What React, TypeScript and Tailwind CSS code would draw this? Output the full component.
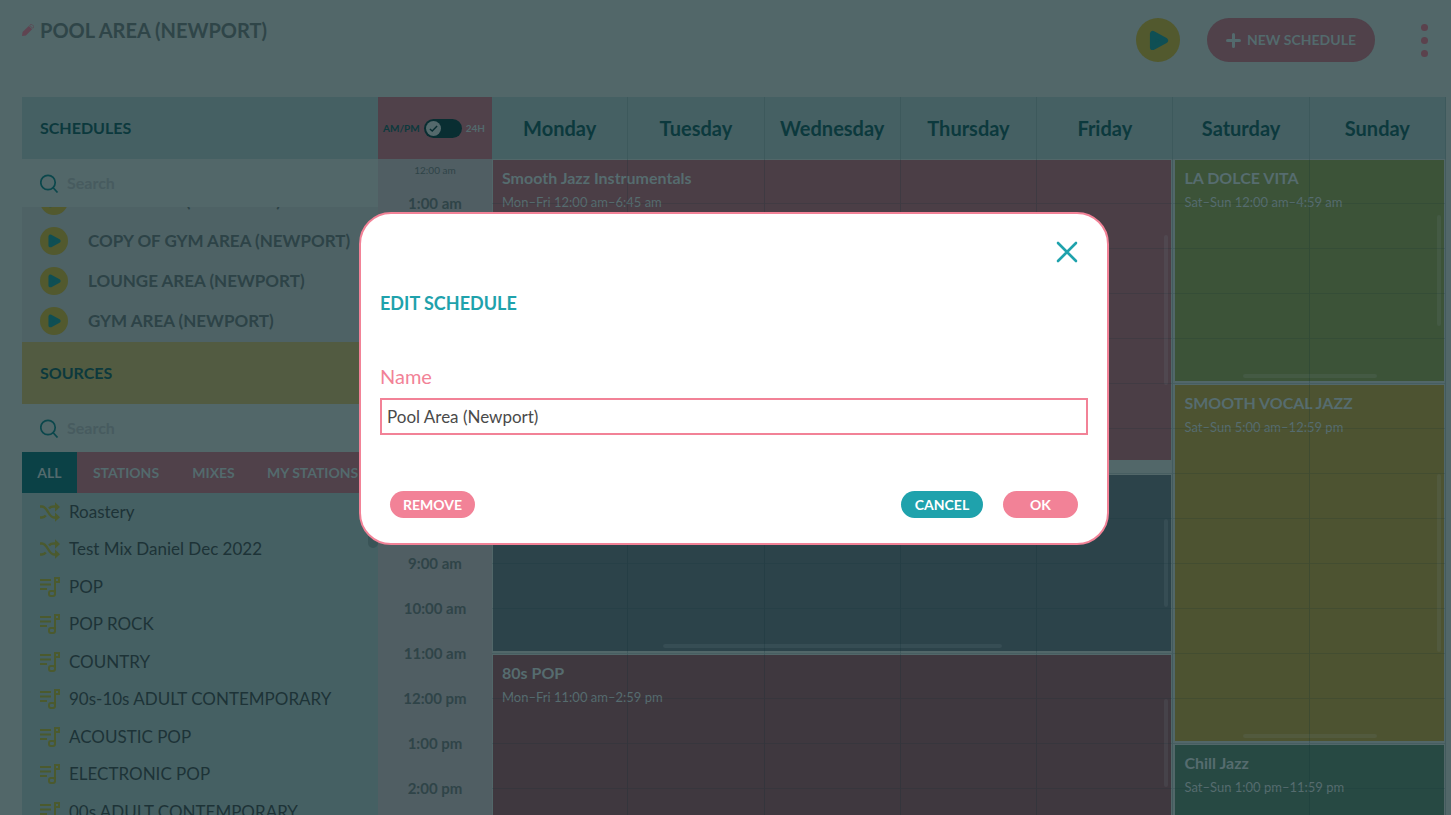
import { useState } from "react";

const HOUR_HEIGHT = 45;

const days = ["Monday", "Tuesday", "Wednesday", "Thursday", "Friday", "Saturday", "Sunday"];

const hours = [
  "1:00 am", "2:00 am", "3:00 am", "4:00 am", "5:00 am", "6:00 am", "7:00 am", "8:00 am",
  "9:00 am", "10:00 am", "11:00 am", "12:00 pm", "1:00 pm", "2:00 pm", "3:00 pm",
];

const schedules = [
  "POOL AREA (NEWPORT)",
  "COPY OF GYM AREA (NEWPORT)",
  "LOUNGE AREA (NEWPORT)",
  "GYM AREA (NEWPORT)",
];

const sources = [
  { name: "Roastery", mix: true },
  { name: "Test Mix Daniel Dec 2022", mix: true },
  { name: "POP" },
  { name: "POP ROCK" },
  { name: "COUNTRY" },
  { name: "90s-10s ADULT CONTEMPORARY" },
  { name: "ACOUSTIC POP" },
  { name: "ELECTRONIC POP" },
  { name: "00s ADULT CONTEMPORARY" },
];

type Slot = { start: number; end: number; title?: string; time?: string; color?: string };

// Slots without a title are gaps in the schedule.
const weekdaySlots: Slot[] = [
  { start: 0, end: 6.75, title: "Smooth Jazz Instrumentals", time: "Mon–Fri 12:00 am–6:45 am", color: "bg-[#4b3e46]" },
  { start: 6.75, end: 7 },
  { start: 7, end: 11, title: "POP", time: "Mon–Fri 7:00 am–10:59 am", color: "bg-[#2c434a]" },
  { start: 11, end: 15, title: "80s POP", time: "Mon–Fri 11:00 am–2:59 pm", color: "bg-[#3f383f]" },
];

const weekendSlots: Slot[] = [
  { start: 0, end: 5, title: "LA DOLCE VITA", time: "Sat–Sun 12:00 am–4:59 am", color: "bg-[#3c5338]" },
  { start: 5, end: 13, title: "SMOOTH VOCAL JAZZ", time: "Sat–Sun 5:00 am–12:59 pm", color: "bg-[#4d5331]" },
  { start: 13, end: 24, title: "Chill Jazz", time: "Sat–Sun 1:00 pm–11:59 pm", color: "bg-[#274943]" },
];

function PlayIcon({ className }: { className: string }) {
  return (
    <svg viewBox="0 0 20 22" className={className} fill="#0f4f54" stroke="#0f4f54" strokeWidth="6" strokeLinejoin="round">
      <path d="M3.500 4v14L16.500 11z" />
    </svg>
  );
}

function ShuffleIcon() {
  return (
    <svg viewBox="0 0 20 20" className="size-5 shrink-0" fill="none" stroke="#4b5a2e" strokeWidth="2.4">
      <path d="M0 4.5h2c5.500 0 6.500 11 12 11h2" />
      <path d="M0 15.500h2c1.600 0 2.800-.7 3.800-1.900" />
      <path d="M9 6.300c1.200-1.200 2.600-1.800 5-1.800h2" />
      <path d="M15 .3 20 5l-5 4.700zM15 10.500l5 4.700-5 4.600z" fill="#4b5a2e" stroke="none" />
    </svg>
  );
}

function PlaylistIcon() {
  return (
    <svg viewBox="0 0 20 20" className="size-5 shrink-0" fill="none" stroke="#4b5a2e" strokeWidth="2">
      <path d="M0 3h11M0 7.500h11M0 12h7" />
      <path d="M15 16V1h4v4h-4" />
      <rect x="9" y="14" width="6" height="5" rx="2" />
    </svg>
  );
}

function SearchBox({ id }: { id: string }) {
  return (
    <div className="flex h-12 shrink-0 items-center gap-2 pl-[18px]">
      <label htmlFor={id} aria-label="Search">
        <svg viewBox="0 0 19 19" className="size-[19px]" fill="none" stroke="#0b474c" strokeWidth="1.7">
          <circle cx="8" cy="8.500" r="7.200" />
          <path d="M13 13.500l4.500 5" />
        </svg>
      </label>
      <input
        id={id}
        type="text"
        placeholder="Search"
        className="min-w-0 flex-1 bg-transparent text-base font-bold outline-none placeholder:text-[#475b5f]"
      />
    </div>
  );
}

function SlotColumn({ slots, className }: { slots: Slot[]; className: string }) {
  return (
    <div className={className}>
      {slots.map((slot) => (
        <div
          key={slot.start}
          className="pt-px pr-[2px] pb-[3px] pl-px"
          style={{ height: (slot.end - slot.start) * HOUR_HEIGHT }}
        >
          {slot.title && (
            <div className={`relative h-full overflow-hidden px-[9px] pt-2 text-[#566c6f] ${slot.color}`}>
              <h3 className="text-base leading-5 font-bold">{slot.title}</h3>
              <p className="mt-1 text-[13px] leading-5">{slot.time}</p>
              <span className="absolute top-1/4 right-[3px] h-1/2 w-1 rounded-full bg-[#71898c]/15" />
              <span className="absolute bottom-[3px] left-1/4 h-1 w-1/2 rounded-full bg-[#71898c]/15" />
            </div>
          )}
        </div>
      ))}
    </div>
  );
}

function TopBar() {
  return (
    <header className="flex h-[97px] shrink-0 items-start justify-between pt-[18px] pr-[23px] pl-[22px]">
      <h1 className="flex items-center gap-[6px] text-xl leading-6 font-bold text-[#2f4548]">
        <svg viewBox="0 0 12 12" className="size-3" fill="#5f4451">
          <path d="M0 12l.6-3.900L6.800 1.900l3.300 3.300-6.200 6.200z" />
          <path d="M7.700 1.400l.8-.8c.5-.5 1.100-.5 1.600 0l1.300 1.300c.5.5.5 1.100 0 1.600l-.8.8z" fill="none" stroke="#5f4451" strokeWidth=".8" />
        </svg>
        POOL AREA (NEWPORT)
      </h1>
      <div className="flex items-center">
        <button aria-label="Play" className="flex size-11 items-center justify-center rounded-full bg-[#52592e]">
          <PlayIcon className="ml-px h-[21px] w-5" />
        </button>
        <button className="ml-[27px] flex h-11 w-[168px] items-center justify-center gap-[6px] rounded-full bg-[#50414a] text-sm font-bold whitespace-nowrap text-[#536a6d]">
          <svg viewBox="0 0 15 15" className="size-[15px]" stroke="#536a6d" strokeWidth="3" strokeLinecap="round">
            <path d="M7.500 1.500v12M1.500 7.500h12" />
          </svg>
          NEW SCHEDULE
        </button>
        <button aria-label="More options" className="ml-[46px] flex flex-col items-center gap-[6px]">
          <span className="size-[7px] rounded-full bg-[#5b424d]" />
          <span className="size-[7px] rounded-full bg-[#5b424d]" />
          <span className="size-[7px] rounded-full bg-[#5b424d]" />
        </button>
      </div>
    </header>
  );
}

function Sidebar() {
  return (
    <aside className="flex w-[356px] shrink-0 flex-col">
      <h2 className="flex h-[62px] shrink-0 items-center bg-[#456063] pl-[18px] text-base font-bold text-[#0c393d]">
        SCHEDULES
      </h2>
      <SearchBox id="schedule-search" />
      <ul className="flex h-[135px] shrink-0 flex-col justify-end overflow-hidden bg-[#4e6265] pb-px pl-[18px]">
        {schedules.map((name) => (
          <li key={name} className="flex h-10 shrink-0 items-center gap-5">
            <button aria-label={`Play ${name}`} className="flex size-7 shrink-0 items-center justify-center rounded-full bg-[#52592e]">
              <PlayIcon className="ml-px h-[14px] w-[13px]" />
            </button>
            <span className="text-[17px] font-bold whitespace-nowrap text-[#2d4347]">{name}</span>
          </li>
        ))}
      </ul>
      <h2 className="flex h-[62px] shrink-0 items-center bg-[#525b41] pl-[18px] text-base font-bold text-[#0c393d]">
        SOURCES
      </h2>
      <SearchBox id="source-search" />
      <nav className="flex h-[41px] shrink-0 overflow-hidden bg-[#50414a] text-sm font-bold whitespace-nowrap text-[#536a6d]">
        <button className="w-[55px] shrink-0 bg-[#0b4146]">ALL</button>
        <button className="w-[98px] shrink-0">STATIONS</button>
        <button className="w-[77px] shrink-0">MIXES</button>
        <button className="shrink-0 pl-[15px]">MY STATIONS</button>
      </nav>
      <div className="relative min-h-0 flex-1 overflow-hidden bg-[#456063]">
        <ul className="pl-[18px]">
          {sources.map((source) => (
            <li key={source.name} className="flex items-center gap-[9px] text-[17px] text-[#1d3337] odd:h-[37px] even:h-[38px]">
              {source.mix ? <ShuffleIcon /> : <PlaylistIcon />}
              {source.name}
            </li>
          ))}
        </ul>
        <span className="absolute top-0 right-0 h-[55px] w-[10px] rounded-full bg-[#3a5457]" />
      </div>
    </aside>
  );
}

function Calendar() {
  const [is24h, setIs24h] = useState(false);

  return (
    <main className="flex min-w-0 flex-1 flex-col">
      <div className="flex h-[62px] shrink-0">
        <label className="flex w-[114px] shrink-0 items-center justify-center gap-1 bg-[#50414a] pr-[2px] text-[10px] font-bold text-[#0c393d]">
          AM/PM
          <input type="checkbox" className="sr-only" checked={is24h} onChange={() => setIs24h(!is24h)} />
          <span className={`flex h-[19px] w-[38px] items-center rounded-full bg-[#092e32] px-[2px] ${is24h ? "justify-end" : ""}`}>
            <span className="flex size-[15px] items-center justify-center rounded-full bg-[#54696c]">
              <svg viewBox="0 0 10 10" className="size-[9px]" fill="none" stroke="#092e32" strokeWidth="1.6">
                <path d="M1 5.500l2.600 2.300L9 2.300" />
              </svg>
            </span>
          </span>
          <span className="text-[#536a6d]">24H</span>
        </label>
        <div className="grid flex-1 grid-cols-7 bg-[#456063]">
          {days.map((day) => (
            <div key={day} className="flex items-center justify-center border-r border-[#3d595c] text-xl font-bold text-[#0c393d]">
              {day}
            </div>
          ))}
        </div>
      </div>
      <div className="flex min-h-0 flex-1 overflow-hidden">
        <div className="w-[114px] shrink-0 bg-[#505e63] text-center font-bold text-[#2f4448]">
          <div className="h-[22px] text-[10px] leading-[22px] font-normal">12:00 am</div>
          {hours.map((hour) => (
            <div key={hour} className="h-[45px] text-[15px] leading-[45px]">{hour}</div>
          ))}
        </div>
        <div className="relative flex-1">
          <div className="grid grid-cols-7">
            <SlotColumn slots={weekdaySlots} className="col-span-5" />
            <SlotColumn slots={weekendSlots} className="col-span-2 pl-px" />
          </div>
          {/* hour and day lines stay visible on top of the blocks */}
          <div className="pointer-events-none absolute inset-0 grid grid-cols-7">
            {days.map((day) => (
              <div key={day} className="border-r border-[#0b2f33]/20">
                {hours.map((hour) => (
                  <div key={hour} className="h-[45px] border-b border-[#0b2f33]/15" />
                ))}
              </div>
            ))}
          </div>
        </div>
      </div>
    </main>
  );
}

function EditScheduleDialog() {
  const [name, setName] = useState("Pool Area (Newport)");

  return (
    <div className="fixed inset-0 flex items-start justify-center pt-[212px] pl-[17px]">
      <div
        role="dialog"
        aria-modal="true"
        aria-labelledby="dialog-title"
        className="w-full max-w-[750px] rounded-[32px] border-2 border-[#f28297] bg-white px-[19px] pt-[27px] pb-[25px]"
      >
        <div className="flex justify-end pr-[10px]">
          <button aria-label="Close">
            <svg viewBox="0 0 22 22" className="size-[22px]" stroke="#1fa2ac" strokeWidth="2.600" strokeLinecap="round">
              <path d="M2 2l18 18M20 2L2 20" />
            </svg>
          </button>
        </div>
        <h2 id="dialog-title" className="mt-7 text-lg leading-6 font-bold text-[#1fa2ac]">
          EDIT SCHEDULE
        </h2>
        <label htmlFor="schedule-name" className="mt-[49px] block text-xl leading-6 text-[#f28297]">
          Name
        </label>
        <input
          id="schedule-name"
          type="text"
          value={name}
          onChange={(e) => setName(e.target.value)}
          className="mt-[10px] block h-[37px] w-full border-2 border-[#f28297] px-[5px] text-[17px] text-[#4a4a4a] outline-none"
        />
        <div className="mt-14 flex justify-between px-[10px] text-sm font-bold text-white">
          <button className="h-[27px] w-[85px] rounded-full bg-[#f28297]">REMOVE</button>
          <div className="flex gap-5">
            <button className="h-[27px] w-[82px] rounded-full bg-[#1fa2ac]">CANCEL</button>
            <button className="h-[27px] w-[75px] rounded-full bg-[#f28297]">OK</button>
          </div>
        </div>
      </div>
    </div>
  );
}

export default function App() {
  return (
    <div className="flex h-screen flex-col overflow-hidden bg-[#526769] font-['Lato',sans-serif]">
      <TopBar />
      <div className="flex min-h-0 flex-1 pr-[5px] pl-[22px]">
        <Sidebar />
        <Calendar />
      </div>
      <EditScheduleDialog />
    </div>
  );
}
